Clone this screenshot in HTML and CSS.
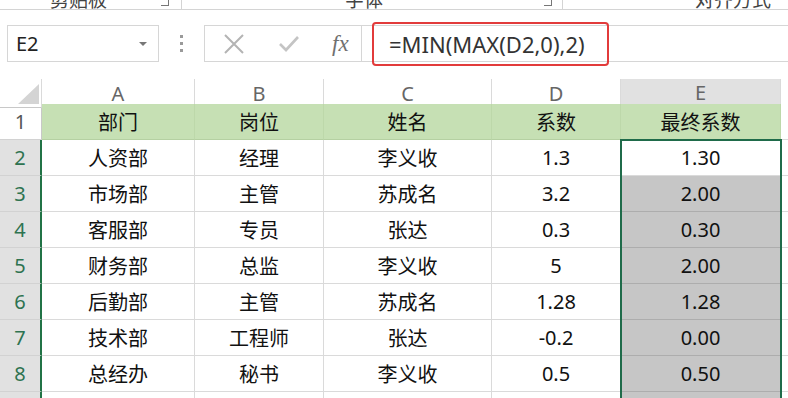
FILE: index.html
```html
<!DOCTYPE html>
<html lang="zh-CN">
<head>
  <meta charset="UTF-8">
  <title>最终系数</title>
  <link rel="stylesheet" href="styles.css">
</head>
<body>
  <!-- ribbon, only the bottom edge is in view -->
  <div class="ribbon">
    <div class="group g1"><span class="label">剪贴板</span><span class="launcher"></span></div>
    <div class="group g2"><span class="label">字体</span><span class="launcher"></span></div>
    <div class="group g3"><span class="label">对齐方式</span></div>
  </div>

  <div class="formula-bar">
    <div class="namebox">
      <span>E2</span>
      <span class="caret"></span>
    </div>
    <div class="grip"><i></i><i></i><i></i></div>
    <div class="fx-buttons">
      <svg class="ico" width="22" height="22" viewBox="0 0 22 22">
        <path d="M2 2 L20 20 M20 2 L2 20" stroke="#b4b4b4" stroke-width="2" fill="none"/>
      </svg>
      <svg class="ico" width="22" height="18" viewBox="0 0 22 18">
        <path d="M2 9 L8 15 L20 2" stroke="#c4c4c4" stroke-width="2.6" fill="none"/>
      </svg>
      <span class="fx">fx</span>
    </div>
    <div class="formula">
      <div class="formula-text">=MIN(MAX(D2,0),2)</div>
    </div>
  </div>

  <div class="sheet">
    <div class="row head">
      <div class="cell corner"><span class="tri"></span></div>
      <div class="cell">A</div>
      <div class="cell">B</div>
      <div class="cell">C</div>
      <div class="cell">D</div>
      <div class="cell sel">E</div>
      <div class="cell"></div>
    </div>
    <div class="row title">
      <div class="cell rh">1</div>
      <div class="cell">部门</div>
      <div class="cell">岗位</div>
      <div class="cell">姓名</div>
      <div class="cell">系数</div>
      <div class="cell">最终系数</div>
      <div class="cell blank"></div>
    </div>
    <div class="row">
      <div class="cell rh sel">2</div>
      <div class="cell">人资部</div>
      <div class="cell">经理</div>
      <div class="cell">李义收</div>
      <div class="cell">1.3</div>
      <div class="cell">1.30</div>
      <div class="cell"></div>
    </div>
    <div class="row">
      <div class="cell rh sel">3</div>
      <div class="cell">市场部</div>
      <div class="cell">主管</div>
      <div class="cell">苏成名</div>
      <div class="cell">3.2</div>
      <div class="cell picked">2.00</div>
      <div class="cell"></div>
    </div>
    <div class="row">
      <div class="cell rh sel">4</div>
      <div class="cell">客服部</div>
      <div class="cell">专员</div>
      <div class="cell">张达</div>
      <div class="cell">0.3</div>
      <div class="cell picked">0.30</div>
      <div class="cell"></div>
    </div>
    <div class="row">
      <div class="cell rh sel">5</div>
      <div class="cell">财务部</div>
      <div class="cell">总监</div>
      <div class="cell">李义收</div>
      <div class="cell">5</div>
      <div class="cell picked">2.00</div>
      <div class="cell"></div>
    </div>
    <div class="row">
      <div class="cell rh sel">6</div>
      <div class="cell">后勤部</div>
      <div class="cell">主管</div>
      <div class="cell">苏成名</div>
      <div class="cell">1.28</div>
      <div class="cell picked">1.28</div>
      <div class="cell"></div>
    </div>
    <div class="row">
      <div class="cell rh sel">7</div>
      <div class="cell">技术部</div>
      <div class="cell">工程师</div>
      <div class="cell">张达</div>
      <div class="cell">-0.2</div>
      <div class="cell picked">0.00</div>
      <div class="cell"></div>
    </div>
    <div class="row">
      <div class="cell rh sel">8</div>
      <div class="cell">总经办</div>
      <div class="cell">秘书</div>
      <div class="cell">李义收</div>
      <div class="cell">0.5</div>
      <div class="cell picked">0.50</div>
      <div class="cell"></div>
    </div>
    <div class="row">
      <div class="cell rh sel">9</div>
      <div class="cell"></div>
      <div class="cell"></div>
      <div class="cell"></div>
      <div class="cell"></div>
      <div class="cell picked"></div>
      <div class="cell"></div>
    </div>
    <!-- selected range E2:E8 -->
    <div class="selection"></div>
  </div>
</body>
</html>
```

FILE: styles.css
```css
body {
  margin: 0;
  width: 788px;
  height: 398px;
  overflow: hidden;
  background: #fff;
  font-family: "Noto Sans", "Noto Sans CJK SC", sans-serif;
  color: #222;
}

/* ribbon strip */
.ribbon {
  display: flex;
  height: 9px;
  border-bottom: 1px solid #d4d4d4;
  overflow: hidden;
}
.group {
  display: flex;
  align-items: flex-start;
  box-sizing: border-box;
  border-right: 1px solid #d4d4d4;
}
.label {
  font-family: "Noto Sans CJK SC", sans-serif;
  font-size: 19px;
  line-height: 20px;
  margin-top: -11px;
  color: #444;
}
.launcher {
  width: 7px;
  height: 5px;
  margin-left: auto;
  border-right: 1px solid #777;
  border-bottom: 1px solid #777;
}
.g1 { width: 182px; padding-left: 50px; padding-right: 12px; }
.g2 { width: 381px; padding-left: 163px; padding-right: 10px; }
.g3 { border-right: none; padding-left: 132px; }

/* formula bar */
.formula-bar {
  display: flex;
  align-items: center;
  height: 37px;
  margin-top: 15px;
}
.namebox {
  display: flex;
  align-items: center;
  box-sizing: border-box;
  width: 152px;
  height: 37px;
  margin-left: 7px;
  padding: 0 11px 0 8px;
  border: 1px solid #d6d6d6;
  font-size: 20px;
  color: #222;
}
.caret {
  margin-left: auto;
  width: 0;
  height: 0;
  border-left: 4px solid transparent;
  border-right: 4px solid transparent;
  border-top: 4px solid #777;
}
.grip {
  width: 45px;
  display: flex;
  flex-direction: column;
  align-items: center;
  gap: 4px;
}
.grip i {
  width: 3px;
  height: 3px;
  background: #9a9a9a;
}
.fx-buttons {
  display: flex;
  align-items: center;
  box-sizing: border-box;
  width: 158px;
  height: 37px;
  padding-left: 18px;
  border: 1px solid #d6d6d6;
}
.ico { display: block; }
.ico + .ico { margin-left: 33px; }
.fx {
  margin-left: 32px;
  font-family: "Liberation Serif", serif;
  font-style: italic;
  font-size: 23px;
  color: #707070;
}
.formula {
  flex: 1;
  display: flex;
  align-items: center;
  box-sizing: border-box;
  height: 37px;
  border-top: 1px solid #d6d6d6;
  border-bottom: 1px solid #d6d6d6;
}
.formula-text {
  box-sizing: border-box;
  width: 237px;
  height: 44px;
  margin-left: 10px;
  padding-left: 15px;
  border: 2px solid #e23b3b;
  border-radius: 4px;
  font-size: 22px;
  line-height: 40px;
  color: #333;
}

/* sheet */
.sheet {
  position: relative;
  margin-top: 17px;
}
.row {
  display: grid;
  grid-template-columns: 42px 153px 129px 168px 129px 160px 40px;
  height: 36px;
}
.cell {
  display: flex;
  align-items: center;
  justify-content: center;
  box-sizing: border-box;
  border-right: 1px solid #dadada;
  border-bottom: 1px solid #dadada;
  font-family: "Noto Sans", "Noto Sans CJK SC", sans-serif;
  font-size: 20px;
  color: #111;
  white-space: nowrap;
}
.head {
  height: 25px;
}
.head .cell {
  font-size: 20px;
  color: #666;
  border-bottom-color: #c8c8c8;
}
.head .cell.sel {
  background: #e1e1e1;
  border-bottom: 2px solid #217346;
}
.corner {
  position: relative;
}
.tri {
  position: absolute;
  right: 2px;
  bottom: 3px;
  width: 0;
  height: 0;
  border-left: 21px solid transparent;
  border-bottom: 20px solid #d4d4d4;
}
.rh {
  color: #555;
  border-right-color: #c8c8c8;
  border-bottom-color: #d2d2d2;
}
.rh.sel {
  background: #e1e1e1;
  color: #2e7350;
  border-right: 2px solid #217346;
}
.title .cell {
  background: #c6e0b4;
  border-right-color: #bdd8aa;
  border-bottom-color: #b5d0a2;
}
.title .cell.rh {
  background: #fff;
  border-right-color: #c8c8c8;
  border-bottom-color: #d2d2d2;
}
.title .cell.blank {
  background: #fff;
  border-bottom-color: #dadada;
}
.picked {
  background: #c6c6c6;
  border-bottom-color: #adadad;
}
.selection {
  position: absolute;
  left: 620px;
  top: 60px;
  width: 162px;
  height: 320px;
  box-sizing: border-box;
  border: 2px solid #1f6b4a;
}
```
